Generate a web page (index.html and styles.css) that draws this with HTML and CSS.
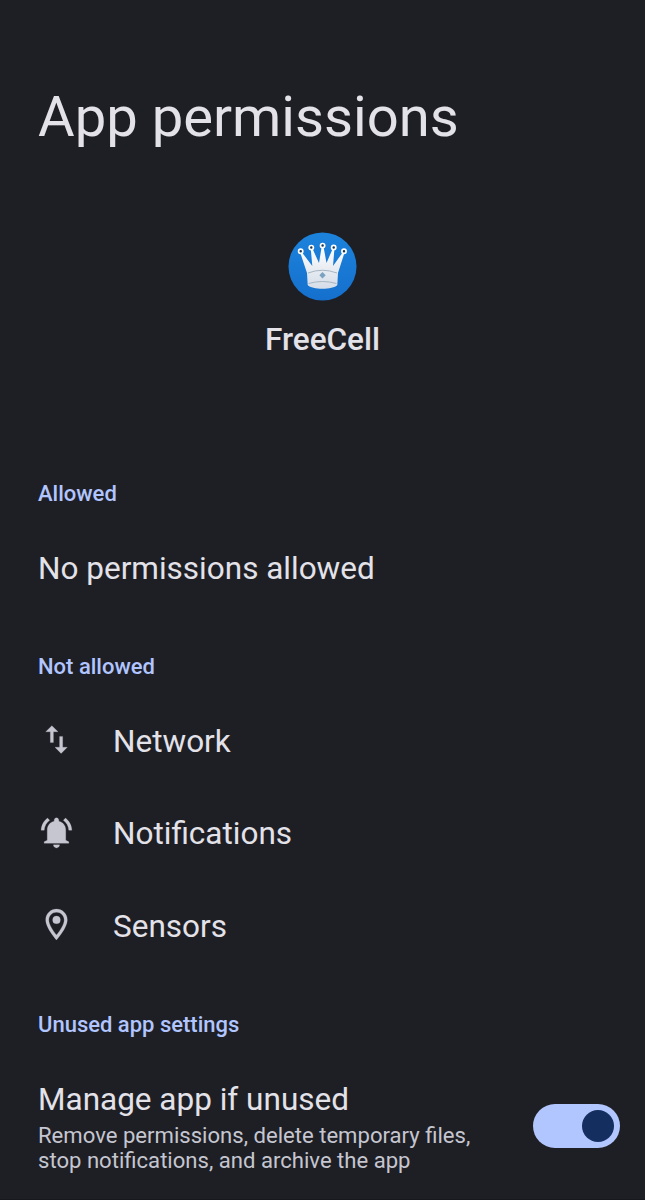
FILE: index.html
```html
<!DOCTYPE html>
<html lang="en">
<head>
<meta charset="utf-8">
<title>App permissions</title>
<link rel="stylesheet" href="styles.css">
</head>
<body>
<main class="screen">
  <h1 class="title"><span>App permissions</span></h1>
  <section class="app">
    <svg class="app-icon" viewBox="0 0 69 69">
      <defs>
        <linearGradient id="disc" x1="0" y1="0" x2="0" y2="1"><stop offset="0" stop-color="#1c83dc"/><stop offset="1" stop-color="#1570cd"/></linearGradient>
        <linearGradient id="crown" x1="0" y1="0" x2="0" y2="1"><stop offset="0" stop-color="#fff"/><stop offset="1" stop-color="#d5dde8"/></linearGradient>
      </defs>
      <circle cx="34.500" cy="34.500" r="34" fill="url(#disc)"/>
      <path d="M12 20L13.700 20L24.300 34L22.700 16H24.200L31 31L33.800 14H35.400L38.500 31L45 16H46.500L45 34L55 20L56.700 20L50 41L49.300 53C45 58 24 58 19.700 53L19 41Z" fill="url(#crown)"/>
      <g fill="#173653" stroke="#fff" stroke-width="1.700"><circle cx="12.700" cy="19.300" r="2.100"/><circle cx="23.300" cy="15.600" r="2.100"/><circle cx="34.600" cy="13.600" r="2.100"/><circle cx="45.700" cy="15.400" r="2.100"/><circle cx="56" cy="19.300" r="2.100"/></g>
      <path d="M20 41Q34.500 35.500 49 41M20.500 51.500Q34.500 47.500 48.500 51.500" fill="none" stroke="#a5b5c3"/>
      <path d="M34.500 40L37.700 43.200L34.500 46.400L31.300 43.200Z" fill="#7ba3c1"/>
    </svg>
    <h2 class="app-name"><span>FreeCell</span></h2>
  </section>
  <h3 class="label allowed"><span>Allowed</span></h3>
  <p class="empty"><span>No permissions allowed</span></p>
  <h3 class="label denied"><span>Not allowed</span></h3>
  <ul class="list">
    <li class="item"><svg class="icon" viewBox="0 0 24 24"><path d="M9 3L5 6.990h3V14h2V6.990h3L9 3zm7 14.010V10h-2v7.010h-3L15 21l4-3.990h-3z"/></svg><span>Network</span></li>
    <li class="item"><svg class="icon" viewBox="0 0 24 24"><path d="M7.580 4.080L6.150 2.650C3.750 4.480 2.170 7.300 2.030 10.500h2c.15-2.650 1.510-4.970 3.550-6.420zm12.390 6.420h2c-.15-3.200-1.730-6.020-4.120-7.850l-1.420 1.430c2.020 1.450 3.390 3.770 3.540 6.420zM18 10.500c0-2.900-1.640-5.200-4.500-5.820V4c0-.83-.67-1.500-1.500-1.500s-1.500.67-1.500 1.500v.68C7.630 5.300 6 7.600 6 10.500V17l-2 1v1h16v-1l-2-1zM12 22c1.100 0 2-.9 2-2h-4c0 1.100.9 2 2 2z"/></svg><span>Notifications</span></li>
    <li class="item"><svg class="icon" viewBox="0 0 24 24"><path d="M12 2C8.130 2 5 5.130 5 9c0 5.250 7 13 7 13s7-7.750 7-13c0-3.870-3.130-7-7-7zM7 9c0-2.760 2.240-5 5-5s5 2.240 5 5c0 2.880-2.880 7.190-5 9.880C9.920 16.210 7 11.850 7 9z"/><circle cx="12" cy="9" r="2.500"/></svg><span>Sensors</span></li>
  </ul>
  <h3 class="label unused"><span>Unused app settings</span></h3>
  <section class="setting">
    <div class="copy">
      <h4 class="name"><span>Manage app if unused</span></h4>
      <p class="summary"><span>Remove permissions, delete temporary files,</span><br><span>stop notifications, and archive the app</span></p>
    </div>
    <div class="switch" role="switch" aria-checked="true" aria-label="Manage app if unused"><div class="thumb"></div></div>
  </section>
</main>
</body>
</html>
```
FILE: styles.css
```css
* { box-sizing: border-box; margin: 0; padding: 0; }
body { background: #1e1f25; color: #e4e2e9; font-family: Roboto, sans-serif; }
.screen { width: 645px; height: 1200px; padding: 84px 25px 0 38px; overflow: hidden; border-bottom: 1px solid #17181d; }
.title { font-size: 56.200px; font-weight: 400; line-height: 66px; }
.app { display: flex; flex-direction: column; align-items: center; padding-top: 82px; margin-right: 13px; }
.app-icon { width: 69px; height: 69px; }
.app-name { margin-top: 18px; font-size: 31.500px; font-weight: 500; line-height: 41px; }
.label { color: #b1c5ff; font-size: 22px; font-weight: 500; line-height: 28px; }
.allowed { margin-top: 120px; }
.empty { margin-top: 41px; font-size: 31.500px; line-height: 40px; }
.denied { margin-top: 64px; }
.list { margin-top: 13px; list-style: none; }
.item { display: flex; align-items: center; height: 92.500px; font-size: 31.500px; }
.item span { padding-top: 2px; }
.icon { width: 37px; height: 37px; margin: 0 38px 1px 0; fill: #c5c6d0; stroke: #c5c6d0; stroke-width: 0.15; }
.unused { margin-top: 39px; }
.setting { display: flex; justify-content: space-between; margin-top: 41px; }
.name { font-size: 31.500px; font-weight: 400; line-height: 40px; }
.summary { color: #c5c6d0; font-size: 22.100px; line-height: 25.500px; margin-top: 3px; }
.switch { display: flex; justify-content: flex-end; align-items: center; width: 87px; height: 44px; margin-top: 24px; padding-right: 6px; border-radius: 22px; background: #b1c5ff; }
.thumb { width: 32px; height: 32px; border-radius: 50%; background: #152e60; }
```
